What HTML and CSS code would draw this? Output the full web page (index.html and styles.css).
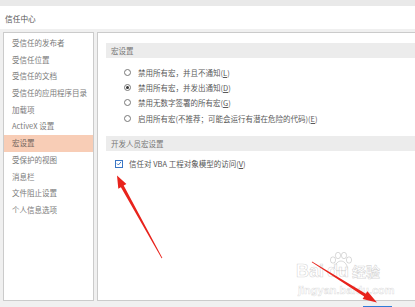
FILE: index.html
```html
<!DOCTYPE html>
<html lang="zh-CN">
<head>
<meta charset="utf-8">
<title>信任中心</title>
<link rel="stylesheet" href="styles.css">
</head>
<body>
<div class="page">
  <div class="topstrip"></div>
  <div class="titlebar">信任中心</div>
  <div class="main">
    <ul class="nav">
      <li>受信任的发布者</li>
      <li>受信任位置</li>
      <li>受信任的文档</li>
      <li>受信任的应用程序目录</li>
      <li>加载项</li>
      <li>ActiveX 设置</li>
      <li class="active">宏设置</li>
      <li>受保护的视图</li>
      <li>消息栏</li>
      <li>文件阻止设置</li>
      <li>个人信息选项</li>
    </ul>
    <div class="content">
      <div class="band">宏设置</div>
      <div class="options">
        <div class="opt"><span class="radio"></span><span>禁用所有宏，并且不通知(<u>L</u>)</span></div>
        <div class="opt"><span class="radio checked"></span><span>禁用所有宏，并发出通知(<u>D</u>)</span></div>
        <div class="opt"><span class="radio"></span><span>禁用无数字签署的所有宏(<u>G</u>)</span></div>
        <div class="opt"><span class="radio"></span><span>启用所有宏(不推荐；可能会运行有潜在危险的代码)(<u>E</u>)</span></div>
      </div>
      <div class="band band2">开发人员宏设置</div>
      <div class="check-row">
        <span class="checkbox">
          <svg width="7" height="7" viewBox="0 0 7 7"><path d="M1.2 3.6 L2.8 5.2 L5.9 1.6" fill="none" stroke="#2f6fc0" stroke-width="1.1"/></svg>
        </span>
        <span>信任对 VBA 工程对象模型的访问(<u>V</u>)</span>
      </div>
    </div>
  </div>
  <div class="footer"><div class="okbtn"></div></div>

  <div class="watermark">
    <svg class="paw" width="26" height="20" viewBox="0 0 26 20">
      <g fill="none" stroke="rgba(140,140,140,0.4)" stroke-width="0.8">
        <ellipse cx="5" cy="8" rx="2.6" ry="3.2"/>
        <ellipse cx="10" cy="3.5" rx="2.6" ry="3.2"/>
        <ellipse cx="16" cy="3.5" rx="2.6" ry="3.2"/>
        <ellipse cx="21" cy="8" rx="2.6" ry="3.2"/>
        <path d="M13 9 C9 9 6 14 7 17 C8 19.5 11 18.5 13 18.5 C15 18.5 18 19.5 19 17 C20 14 17 9 13 9 Z"/>
      </g>
    </svg>
    <div class="wm-row"><span class="wm-bai">Bai</span><span class="wm-du">du</span><span class="wm-jy">经验</span></div>
    <div class="wm-url">jingyan.baidu.com</div>
  </div>

  <svg class="arrows" width="415" height="307" viewBox="0 0 415 307">
    <polygon fill="#e8231c" points="162.4,258 123.7,185.6 126.4,184 117,175.5 118.3,188.8 120.9,187.2 161.6,258.3"/>
    <polygon fill="#e8231c" points="312,261.6 365.8,293.7 367.4,291.3 377,302.5 362.6,298.9 364.2,296.5 311.8,262.3"/>
  </svg>
</div>
</body>
</html>
```

FILE: styles.css
```css
* { box-sizing: border-box; }
html, body {
  margin: 0;
  padding: 0;
  width: 415px;
  height: 307px;
  overflow: hidden;
  background: #f0f0f0;
  font-family: "Noto Sans CJK SC", "Noto Sans", sans-serif;
  font-size: 7.5px;
  color: #555;
}
.page {
  position: relative;
  width: 415px;
  height: 307px;
  overflow: hidden;
}
.topstrip {
  height: 6px;
  background: #e9e9e9;
}
.titlebar {
  height: 23px;
  background: #ffffff;
  padding-left: 5px;
  line-height: 26px;
  color: #555;
  font-size: 7.7px;
}
.main {
  display: flex;
  gap: 3px;
  padding: 3px 0 0 3px;
  height: 272px;
  background: #f0f0f0;
}
.nav {
  list-style: none;
  margin: 0;
  padding: 2px 0 0 0;
  width: 91px;
  height: 269px;
  flex: none;
  background: #fff;
  border: 1px solid #cbcbcb;
}
.nav li {
  height: 16.7px;
  line-height: 16.7px;
  padding-left: 8px;
  color: #7a7a7a;
  white-space: nowrap;
}
.nav li.active {
  background: #f8cdb6;
  color: #736660;
}
.content {
  flex: none;
  width: 340px;
  height: 269px;
  background: #fff;
  border: 1px solid #cbcbcb;
  padding: 10px 0 0 8px;
}
.band {
  height: 15px;
  line-height: 15px;
  background: #ececec;
  padding-left: 5px;
  color: #777;
}
.options {
  display: flex;
  flex-direction: column;
  margin-top: 7px;
  padding-left: 18px;
}
.opt {
  display: flex;
  align-items: center;
  gap: 7px;
  height: 15.2px;
  color: #5a5a5a;
  white-space: nowrap;
}
.opt u, .check-row u { text-decoration: underline; text-underline-offset: 1px; }
.radio {
  width: 7px;
  height: 7px;
  border: 1px solid #777;
  border-radius: 50%;
  flex: none;
  display: flex;
  align-items: center;
  justify-content: center;
  background: #fff;
}
.radio.checked::after {
  content: "";
  width: 3px;
  height: 3px;
  border-radius: 50%;
  background: #333;
}
.band2 {
  margin-top: 10.5px;
}
.check-row {
  display: flex;
  align-items: center;
  gap: 6px;
  margin-top: 5px;
  height: 15px;
  padding-left: 9px;
  color: #555;
  white-space: nowrap;
}
.checkbox {
  width: 8px;
  height: 8px;
  border: 1px solid #3a76c4;
  flex: none;
  display: flex;
  align-items: center;
  justify-content: center;
  background: #fff;
}
.checkbox svg { display: block; }
.footer {
  display: flex;
  justify-content: flex-end;
  padding: 5px 23px 0 0;
  height: 7px;
}
.okbtn {
  width: 29px;
  height: 10px;
  border: 1px solid #2f7bd8;
  border-bottom: none;
  background: #e5f1fb;
}
.watermark {
  position: absolute;
  left: 296px;
  top: 252px;
  width: 92px;
  height: 45px;
}
.paw {
  position: absolute;
  left: 32px;
  top: 0;
}
.wm-row {
  position: absolute;
  left: 0;
  top: 9px;
  display: flex;
  align-items: baseline;
  font-family: "Liberation Sans", sans-serif;
  font-weight: bold;
  font-size: 18px;
  color: rgba(255,255,255,0.6);
  -webkit-text-stroke: 0.6px rgba(150,150,150,0.4);
  white-space: nowrap;
}
.wm-du { margin-left: 3px; }
.wm-jy {
  margin-left: 3px;
  font-family: "Noto Sans CJK SC", sans-serif;
  font-size: 14px;
}
.wm-url {
  position: absolute;
  left: 2px;
  top: 32px;
  font-family: "Liberation Sans", sans-serif;
  font-size: 11px;
  font-weight: bold;
  color: rgba(255,255,255,0.6);
  -webkit-text-stroke: 0.5px rgba(150,150,150,0.35);
  white-space: nowrap;
}
.arrows {
  position: absolute;
  left: 0;
  top: 0;
  pointer-events: none;
}
```
